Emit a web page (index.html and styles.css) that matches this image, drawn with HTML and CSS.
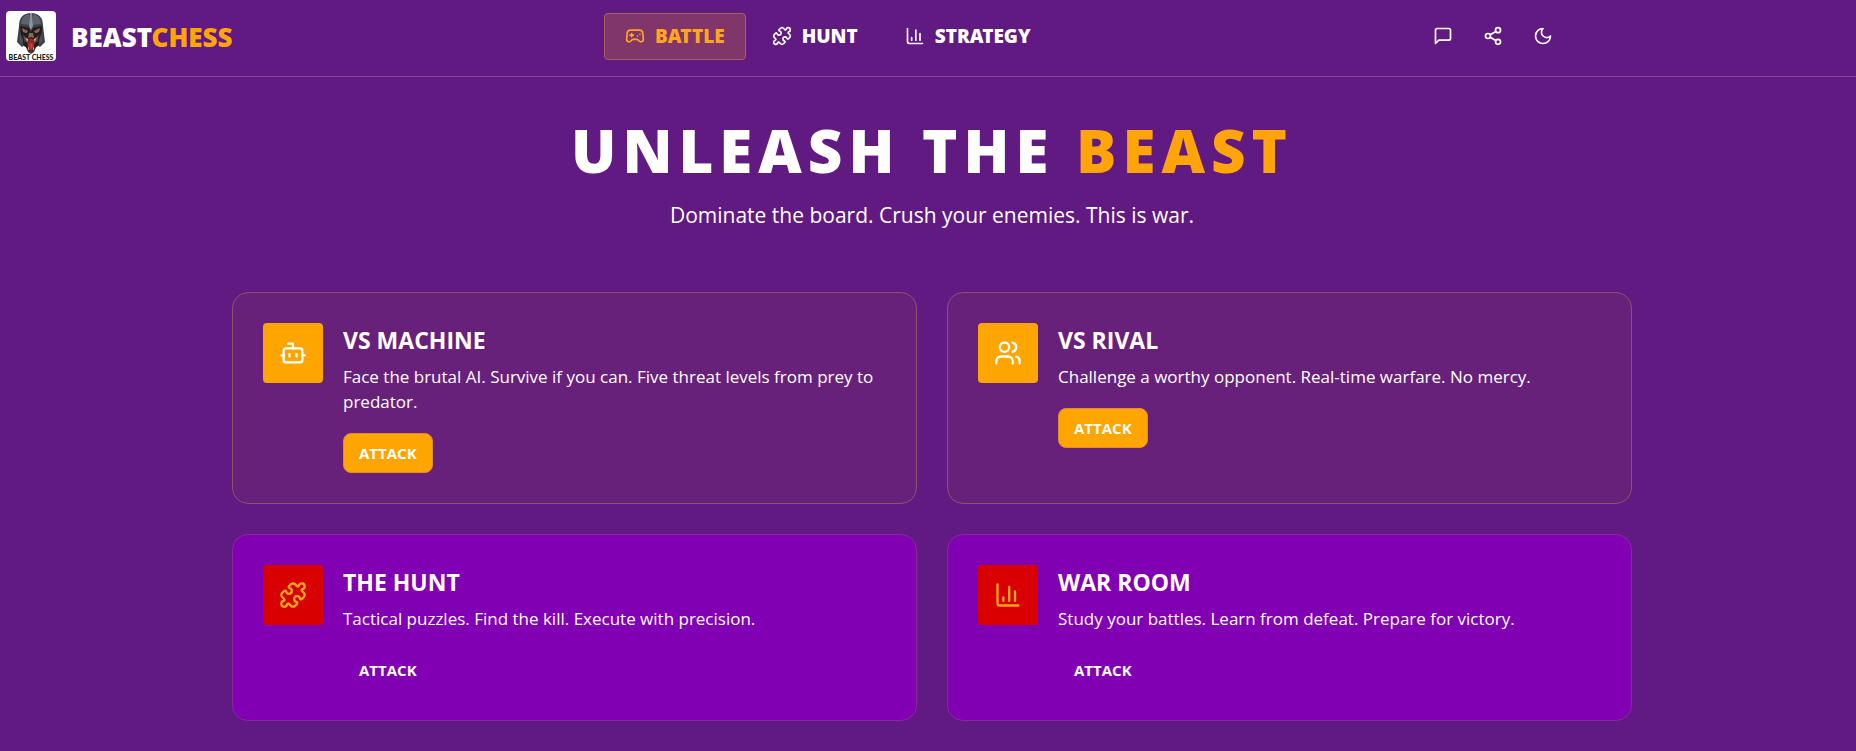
FILE: index.html
```html
<!DOCTYPE html>
<html lang="en">
<head>
<meta charset="UTF-8">
<meta name="viewport" content="width=device-width, initial-scale=1.0">
<title>Beast Chess</title>
<link rel="stylesheet" href="styles.css">
</head>
<body>

<!-- Shared icons -->
<svg class="sprite" aria-hidden="true">
  <symbol id="icon-gamepad" viewBox="0 0 24 24">
    <path d="M6 11h4M8 9v4M15 12h.01M18 10h.01"/>
    <path d="M17.32 5H6.68a4 4 0 0 0-3.978 3.59C2.604 9.416 2 14.456 2 16a3 3 0 0 0 3 3c1 0 1.5-.5 2-1l1.414-1.414A2 2 0 0 1 9.828 16h4.344a2 2 0 0 1 1.414.586L17 18c.5.5 1 1 2 1a3 3 0 0 0 3-3c0-1.545-.604-6.584-.685-7.258A4 4 0 0 0 17.32 5z"/>
  </symbol>
  <symbol id="icon-puzzle" viewBox="0 0 24 24">
    <path d="M15.39 4.39a1 1 0 0 0 1.68-.474 2.5 2.5 0 1 1 3.014 3.015 1 1 0 0 0-.474 1.68l1.683 1.682a2.414 2.414 0 0 1 0 3.414L19.61 15.39a1 1 0 0 1-1.68-.474 2.5 2.5 0 1 0-3.014 3.015 1 1 0 0 1 .474 1.68l-1.683 1.682a2.414 2.414 0 0 1-3.414 0L8.61 19.61a1 1 0 0 0-1.68.474 2.5 2.5 0 1 1-3.014-3.015 1 1 0 0 0 .474-1.68l-1.683-1.682a2.414 2.414 0 0 1 0-3.414L4.39 8.61a1 1 0 0 1 1.68.474 2.5 2.5 0 1 0 3.014-3.015 1 1 0 0 1-.474-1.68l1.683-1.682a2.414 2.414 0 0 1 3.414 0z"/>
  </symbol>
  <symbol id="icon-chart" viewBox="0 0 24 24">
    <path d="M3 3v16a2 2 0 0 0 2 2h16M18 17V9M13 17V5M8 17v-3"/>
  </symbol>
  <symbol id="icon-message" viewBox="0 0 24 24">
    <path d="M21 15a2 2 0 0 1-2 2H7l-4 4V5a2 2 0 0 1 2-2h14a2 2 0 0 1 2 2z"/>
  </symbol>
  <symbol id="icon-share" viewBox="0 0 24 24">
    <circle cx="18" cy="5" r="3"/>
    <circle cx="6" cy="12" r="3"/>
    <circle cx="18" cy="19" r="3"/>
    <path d="M8.59 13.51l6.83 3.98M15.41 6.51l-6.82 3.98"/>
  </symbol>
  <symbol id="icon-moon" viewBox="0 0 24 24">
    <path d="M12 3a6 6 0 0 0 9 9 9 9 0 1 1-9-9z"/>
  </symbol>
  <symbol id="icon-bot" viewBox="0 0 24 24">
    <path d="M12 8V4H8M2 14h2M20 14h2M15 13v2M9 13v2"/>
    <rect x="4" y="8" width="16" height="12" rx="2"/>
  </symbol>
  <symbol id="icon-users" viewBox="0 0 24 24">
    <path d="M16 21v-2a4 4 0 0 0-4-4H6a4 4 0 0 0-4 4v2"/>
    <circle cx="9" cy="7" r="4"/>
    <path d="M22 21v-2a4 4 0 0 0-3-3.87M16 3.13a4 4 0 0 1 0 7.75"/>
  </symbol>
</svg>

<header class="header">
  <div class="header-inner">
    <a class="logo" href="#">
      <span class="logo-badge">
        <svg class="logo-helmet" viewBox="0 0 40 42" aria-hidden="true">
          <path fill="#3a3e45" d="M20 1C12 1 8 6 8 14l-1 8-1 8 5 5 3-2 3 7 3 2 3-2 3-7 3 2 5-5-1-8-1-8C32 6 28 1 20 1z"/>
          <path fill="#5c636b" d="M18 2c-5 1-8 5-8 10l8 1zM22 2c5 1 8 5 8 10l-8 1z"/>
          <path fill="#8b929a" d="M19 1h2l1 13-2 4-2-4z"/>
          <path fill="#1c1d21" d="M9 14l9 2 2 4 2-4 9-2-1 12-3 8-3 2-4 4-4-4-3-2-3-8z"/>
          <path fill="#4b5057" d="M9 20l3 8v5l-4-4zM31 20l-3 8v5l4-4z"/>
          <path fill="#8d6a58" d="M11 16l6 3-1 2-4-1zM29 16l-6 3 1 2 4-1zM18 21h4l1 5-3-1-3 1z"/>
          <path fill="#d0442b" d="M13 18l3 2-2 1zM27 18l-3 2 2 1z"/>
          <path fill="#71493d" d="M12 23l4 3-2 5zM28 23l-4 3 2 5z"/>
          <path fill="#8e2623" d="M16 28l4-2 4 2-1 9-3 3-3-3z"/>
          <path fill="#c33d33" d="M18 32l2-1 2 1-1 5h-2z"/>
          <path fill="#dccab0" d="M15 26l1 5 1-4zM25 26l-1 5-1-4zM17 37l1-3v4zM23 37l-1-3v4z"/>
        </svg>
        <span class="logo-caption">BEAST CHESS</span>
      </span>
      <span class="logo-text">BEAST<span class="accent">CHESS</span></span>
    </a>

    <nav class="nav">
      <a class="nav-link active" href="#"><svg class="icon"><use href="#icon-gamepad"/></svg>BATTLE</a>
      <a class="nav-link" href="#"><svg class="icon"><use href="#icon-puzzle"/></svg>HUNT</a>
      <a class="nav-link" href="#"><svg class="icon"><use href="#icon-chart"/></svg>STRATEGY</a>
    </nav>

    <div class="actions">
      <button class="action" type="button" aria-label="Chat"><svg class="icon"><use href="#icon-message"/></svg></button>
      <button class="action" type="button" aria-label="Share"><svg class="icon"><use href="#icon-share"/></svg></button>
      <button class="action" type="button" aria-label="Dark mode"><svg class="icon"><use href="#icon-moon"/></svg></button>
    </div>
  </div>
</header>

<main class="main">
  <section class="hero">
    <h1 class="hero-title">UNLEASH THE <span class="accent">BEAST</span></h1>
    <p class="hero-subtitle">Dominate the board. Crush your enemies. This is war.</p>
  </section>

  <section class="cards">
    <article class="card featured">
      <div class="card-icon"><svg class="icon large"><use href="#icon-bot"/></svg></div>
      <div class="card-body">
        <h2 class="card-title">VS MACHINE</h2>
        <p class="card-text">Face the brutal AI. Survive if you can. Five threat levels from prey to predator.</p>
        <button class="attack" type="button">ATTACK</button>
      </div>
    </article>

    <article class="card featured">
      <div class="card-icon"><svg class="icon large"><use href="#icon-users"/></svg></div>
      <div class="card-body">
        <h2 class="card-title">VS RIVAL</h2>
        <p class="card-text">Challenge a worthy opponent. Real-time warfare. No mercy.</p>
        <button class="attack" type="button">ATTACK</button>
      </div>
    </article>

    <article class="card">
      <div class="card-icon"><svg class="icon large"><use href="#icon-puzzle"/></svg></div>
      <div class="card-body">
        <h2 class="card-title">THE HUNT</h2>
        <p class="card-text">Tactical puzzles. Find the kill. Execute with precision.</p>
        <button class="attack" type="button">ATTACK</button>
      </div>
    </article>

    <article class="card">
      <div class="card-icon"><svg class="icon large"><use href="#icon-chart"/></svg></div>
      <div class="card-body">
        <h2 class="card-title">WAR ROOM</h2>
        <p class="card-text">Study your battles. Learn from defeat. Prepare for victory.</p>
        <button class="attack" type="button">ATTACK</button>
      </div>
    </article>
  </section>
</main>

</body>
</html>
```

FILE: styles.css
```css
* {
  box-sizing: border-box;
}

body {
  margin: 0;
  min-height: 100vh;
  background: #601a82;
  color: #fff;
  font-family: "Segoe UI", "Open Sans", "Noto Sans", sans-serif;
}

.sprite {
  display: none;
}

.icon {
  width: 20px;
  height: 20px;
  flex-shrink: 0;
  fill: none;
  stroke: currentColor;
  stroke-width: 2;
  stroke-linecap: round;
  stroke-linejoin: round;
}

.icon.large {
  width: 28px;
  height: 28px;
}

.accent {
  color: #ffa50a;
}

/* Header */
.header {
  border-bottom: 1px solid #87459a;
}

.header-inner {
  display: flex;
  align-items: center;
  justify-content: space-between;
  max-width: 1569px;
  padding: 11px 6px 15px;
}

.logo {
  display: flex;
  align-items: center;
  gap: 15px;
  color: #fff;
  text-decoration: none;
}

.logo-badge {
  display: flex;
  flex-direction: column;
  align-items: center;
  width: 50px;
  height: 50px;
  padding-top: 1px;
  border-radius: 4px;
  background: #fff;
}

.logo-helmet {
  width: 40px;
  height: 42px;
}

.logo-caption {
  color: #222;
  font-family: Lato, sans-serif;
  font-size: 7px;
  font-weight: 900;
  line-height: 6px;
  white-space: nowrap;
}

.logo-text {
  padding-top: 2px;
  font-family: "Noto Sans", sans-serif;
  font-size: 26px;
  font-weight: 900;
  line-height: 32px;
}

.nav {
  display: flex;
  gap: 5px;
}

.nav-link {
  display: flex;
  align-items: center;
  gap: 10px;
  padding: 10px 20px;
  border: 1px solid transparent;
  border-radius: 4px;
  color: #fff;
  font-family: "Noto Sans", sans-serif;
  font-size: 19px;
  font-weight: 900;
  line-height: 25px;
  text-decoration: none;
}

.nav-link.active {
  border-color: #a8605a;
  background: #80366a;
  color: #ffa520;
}

.actions {
  display: flex;
  gap: 10px;
}

.action {
  display: flex;
  align-items: center;
  justify-content: center;
  width: 40px;
  height: 40px;
  padding: 0;
  border: 0;
  background: none;
  color: #fff;
  cursor: pointer;
}

/* Hero */
.main {
  max-width: 1456px;
  margin: 0 auto;
  padding: 38px 24px 30px 32px;
}

.hero {
  margin-bottom: 59px;
  text-align: center;
}

.hero-title {
  margin: 0 0 13px;
  font-family: "Noto Sans", sans-serif;
  font-size: 60px;
  font-weight: 900;
  letter-spacing: 6px;
  line-height: 70px;
}

.hero-subtitle {
  margin: 0;
  font-size: 21px;
  line-height: 35px;
}

/* Cards */
.cards {
  display: grid;
  grid-template-columns: 1fr 1fr;
  gap: 30px;
}

.card {
  display: flex;
  align-items: flex-start;
  gap: 20px;
  padding: 30px;
  border: 1px solid #87289f;
  border-radius: 16px;
  background: #8200b4;
}

.card.featured {
  border-color: #935070;
  background: #68217b;
}

.card-icon {
  display: flex;
  align-items: center;
  justify-content: center;
  flex-shrink: 0;
  width: 60px;
  height: 60px;
  border-radius: 4px;
  background: #d80000;
  color: #ffa51e;
}

.featured .card-icon {
  background: #ffa500;
  color: #fff;
}

.card-title {
  margin: 0 0 6px;
  font-size: 23px;
  font-weight: 700;
  line-height: 35px;
}

.card-text {
  margin: 0 0 19px;
  font-size: 17px;
  line-height: 25px;
}

.attack {
  height: 40px;
  padding: 0 15px;
  border: 1px solid transparent;
  border-radius: 8px;
  background: none;
  color: #fff;
  font-family: inherit;
  font-size: 15px;
  font-weight: 700;
  cursor: pointer;
}

.featured .attack {
  border-color: #e08c2c;
  background: #ffa500;
}

@media (max-width: 900px) {
  .header-inner {
    flex-wrap: wrap;
    gap: 10px;
  }

  .cards {
    grid-template-columns: 1fr;
  }
}
```
